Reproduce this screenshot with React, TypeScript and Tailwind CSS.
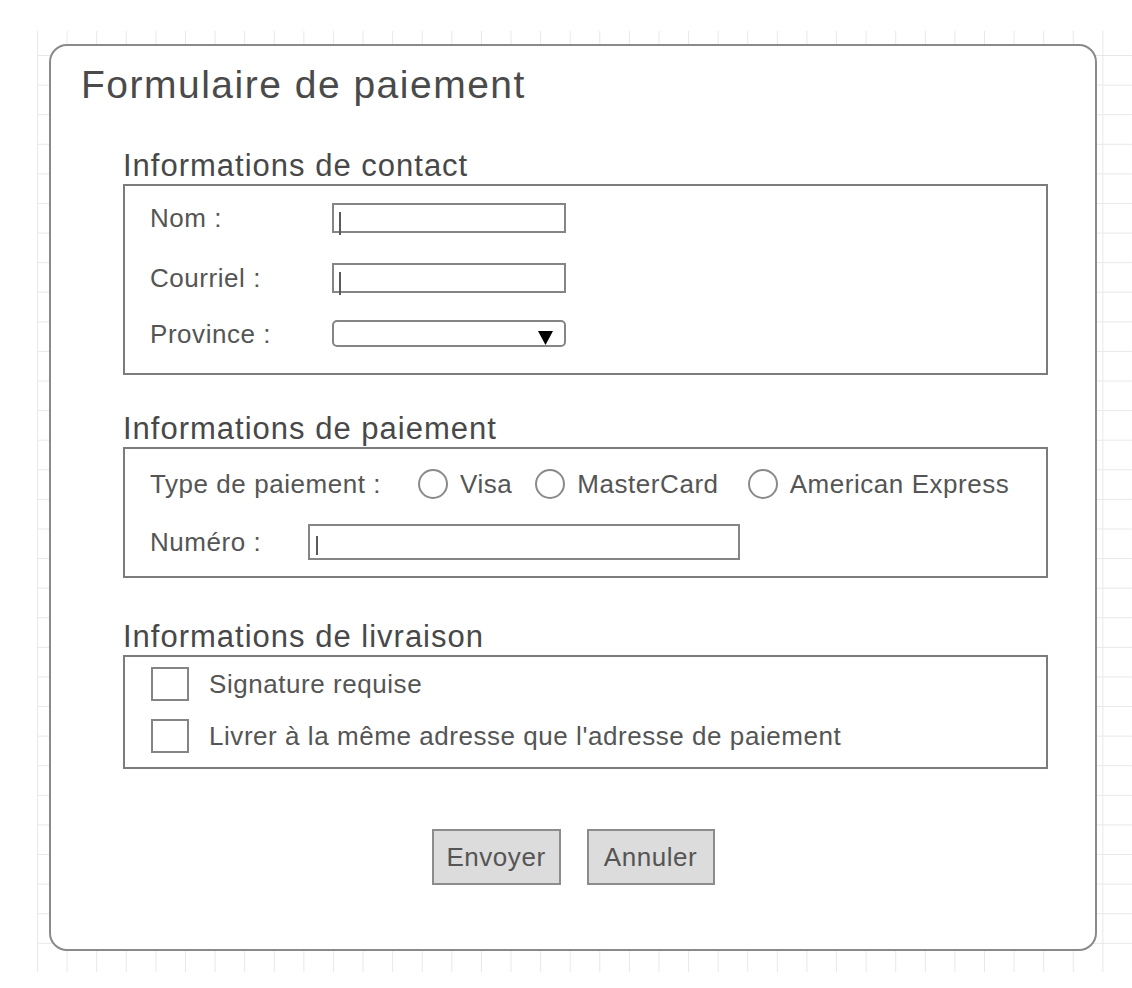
import React from "react";

// Wireframe of a payment form on a light grid canvas

const Caret = ({ h = 23 }: { h?: number }) => (
  <span className="block w-[2px] bg-[#5a5a5a]" style={{ height: h }} />
);

const TextInput = ({ width }: { width: string }) => (
  <div className={`${width} h-[30px] border-2 border-[#858585] bg-white pl-[5px] pt-[7px]`}>
    <Caret />
  </div>
);

const Radio = ({ label }: { label: string }) => (
  <div className="flex items-center gap-[12px]">
    <span className="w-[30px] h-[30px] rounded-full border-2 border-[#8a8a8a] bg-white" />
    <span>{label}</span>
  </div>
);

const Checkbox = ({ label }: { label: string }) => (
  <div className="flex items-center">
    <span className="w-[38px] h-[34px] border-2 border-[#858585] bg-white" />
    <span className="ml-[20px]">{label}</span>
  </div>
);

const Heading = ({ children }: { children: React.ReactNode }) => (
  <h2 className="h-[31px] text-[31px] leading-[31px] tracking-[1px] text-[#484848] mb-[3px] whitespace-nowrap">
    {children}
  </h2>
);

export default function App() {
  return (
    <div className="min-h-[988px] bg-white pt-[31px] pl-[37px] font-['Liberation_Sans',Arial,sans-serif] text-[26px] leading-none tracking-[0.55px] text-[#555]">
      <div className="h-[941px] pt-[13px] pl-[12px] bg-[linear-gradient(to_right,#e8e8e8_1px,transparent_1px),linear-gradient(to_bottom,#e8e8e8_1px,transparent_1px)] bg-[size:29.6px_29.6px] bg-[position:0px_24px]">
        <div className="w-[1048px] h-[907px] rounded-[18px] border-2 border-[#8a8a8a] bg-white flex flex-col">
          {/* Title */}
          <h1 className="mt-[19px] ml-[30px] h-[39px] text-[39px] leading-[39px] tracking-[1.5px] text-[#4a4a4a] whitespace-nowrap">
            Formulaire de paiement
          </h1>

          <div className="pl-[72px] pr-[47px] mt-[46px]">
            {/* Contact */}
            <Heading>Informations de contact</Heading>
            <div className="h-[191px] border-2 border-[#7c7c7c] pt-[17px] pl-[25px]">
              <div className="flex items-center h-[30px]">
                <span className="w-[182px]">Nom :</span>
                <TextInput width="w-[234px]" />
              </div>
              <div className="flex items-center h-[30px] mt-[30px]">
                <span className="w-[182px]">Courriel :</span>
                <TextInput width="w-[234px]" />
              </div>
              <div className="flex items-center h-[27px] mt-[27px]">
                <span className="w-[182px]">Province :</span>
                <div className="w-[234px] h-[27px] rounded-[5px] border-2 border-[#858585] bg-white flex justify-end items-end pr-[11px]">
                  <svg width="15" height="14" viewBox="0 0 15 14">
                    <polygon points="0,0 15,0 7.5,14" fill="#000" />
                  </svg>
                </div>
              </div>
            </div>

            {/* Paiement */}
            <div className="mt-[38px]">
              <Heading>Informations de paiement</Heading>
            </div>
            <div className="h-[131px] border-2 border-[#7c7c7c] pt-[20px] pl-[25px]">
              <div className="flex items-center h-[30px]">
                <span className="w-[268px] whitespace-nowrap">Type de paiement :</span>
                <Radio label="Visa" />
                <div className="ml-[23px]">
                  <Radio label="MasterCard" />
                </div>
                <div className="ml-[29px]">
                  <Radio label="American Express" />
                </div>
              </div>
              <div className="flex items-center h-[36px] mt-[25px]">
                <span className="w-[158px]">Numéro :</span>
                <div className="w-[432px] h-[36px] border-2 border-[#858585] bg-white pl-[6px] pt-[10px]">
                  <Caret h={19} />
                </div>
              </div>
            </div>

            {/* Livraison */}
            <div className="mt-[43px]">
              <Heading>Informations de livraison</Heading>
            </div>
            <div className="h-[114px] border-2 border-[#7c7c7c] pt-[10px] pl-[26px]">
              <Checkbox label="Signature requise" />
              <div className="mt-[18px]">
                <Checkbox label="Livrer à la même adresse que l'adresse de paiement" />
              </div>
            </div>
          </div>

          {/* Actions */}
          <div className="flex justify-center gap-[26px] mt-[60px]">
            <button className="w-[129px] h-[56px] bg-[#dcdcdc] border-2 border-[#8c8c8c] text-[#555]">
              Envoyer
            </button>
            <button className="w-[128px] h-[56px] bg-[#dcdcdc] border-2 border-[#8c8c8c] text-[#555]">
              Annuler
            </button>
          </div>
        </div>
      </div>
    </div>
  );
}
